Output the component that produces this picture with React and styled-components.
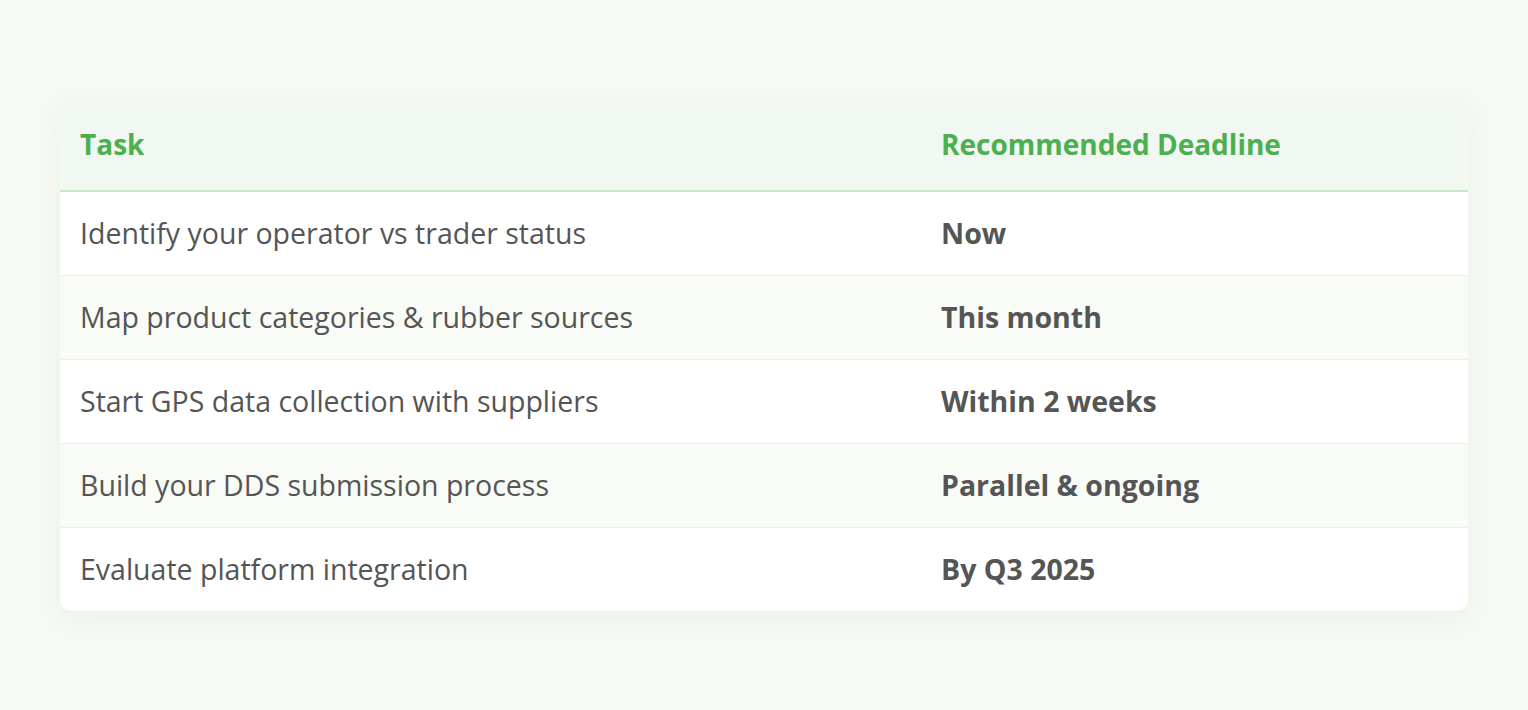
import React from "react"
import styled, { createGlobalStyle } from "styled-components"

const GlobalStyle = createGlobalStyle`
  body {
    margin: 0;
    background: #f8faf5;
    font-family: "Open Sans", "Noto Sans", sans-serif;
  }
`

const Page = styled.div`
  min-height: 710px;
  padding: 100px 60px;
  box-sizing: border-box;
`

const Card = styled.div`
  box-shadow: 0 6px 28px rgba(76, 140, 80, 0.09);
`

const Table = styled.table`
  width: 100%;
  border-collapse: separate;
  border-spacing: 0;
  border-bottom: 1px solid #e6f3e7;
  background: #f1f6ef;
`

const HeadCell = styled.th`
  text-align: left;
  background: #f1f7f1;
  color: #4caf50;
  font-size: 28px;
  font-weight: 700;
  line-height: 43px;
  padding: 23px 20px 24px;
  border-bottom: 2px solid #c8e6c9;
  width: ${props => props.$width || "auto"};
`

const Row = styled.tr`
  &:last-child td:first-child {
    border-bottom-left-radius: 12px;
  }
  &:last-child td:last-child {
    border-bottom-right-radius: 12px;
  }
`

const Cell = styled.td`
  background: ${props => (props.$alt ? "#f8fbf6" : "#ffffff")};
  font-size: 28.5px;
  line-height: 43px;
  padding: 20px;
  color: #555555;
  font-weight: ${props => (props.$strong ? 700 : 400)};
  border-bottom: 1px solid #e6f3e7;
  tr:last-child & {
    border-bottom: none;
  }
`

const rows = [
  ["Identify your operator vs trader status", "Now"],
  ["Map product categories & rubber sources", "This month"],
  ["Start GPS data collection with suppliers", "Within 2 weeks"],
  ["Build your DDS submission process", "Parallel & ongoing"],
  ["Evaluate platform integration", "By Q3 2025"],
]

const App = () => {
  return (
    <Page>
      <GlobalStyle />
      <Card>
        <Table>
          <thead>
            <tr>
              <HeadCell $width="61.15%">Task</HeadCell>
              <HeadCell>Recommended Deadline</HeadCell>
            </tr>
          </thead>
          <tbody>
            {rows.map(([task, when], i) => (
              <Row key={task}>
                <Cell $alt={i % 2 === 1}>{task}</Cell>
                <Cell $alt={i % 2 === 1} $strong>
                  {when}
                </Cell>
              </Row>
            ))}
          </tbody>
        </Table>
      </Card>
    </Page>
  )
}

export default App
